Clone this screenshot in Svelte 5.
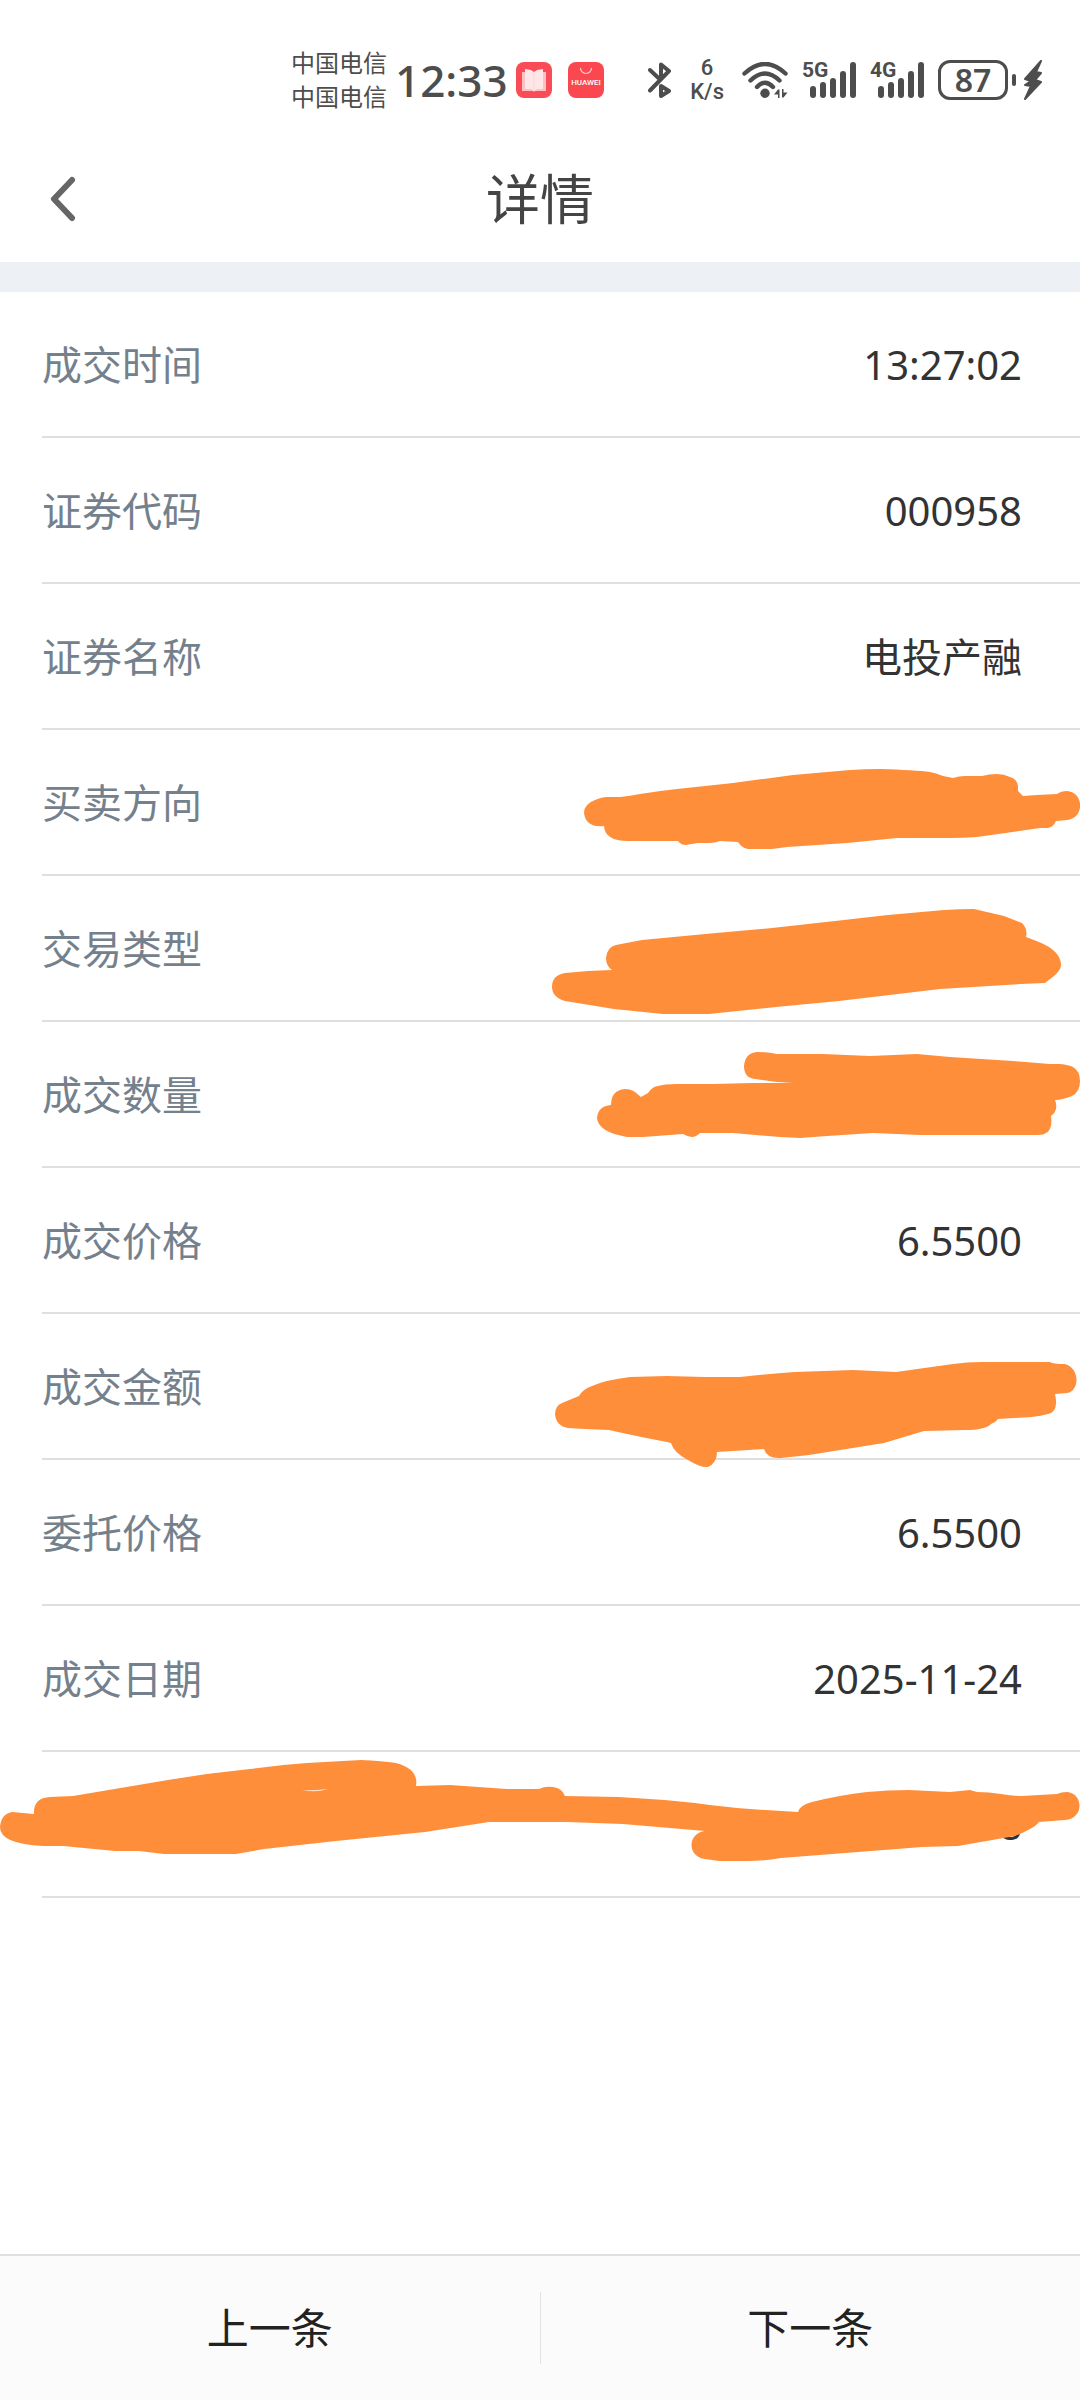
<script>
	const rows = [
		{ label: '成交时间', value: '13:27:02' },
		{ label: '证券代码', value: '000958' },
		{ label: '证券名称', value: '电投产融' },
		{
			label: '买卖方向',
			mark: 'M584 83Q584 74 595 70Q602 67 607 67L620 67Q630 66 640 64Q658 61 677 59L733 53L793 45L850 40Q865 39 880 39Q915 40 930 42Q936 43 943 46L953 48Q959 46 965 46L982 46Q989 44 997 44Q1004 44 1010 47Q1017 49 1018 56L1018 61L1023 66L1037 65L1057 64Q1061 61 1067 61C1084 62 1085 88 1067 90L1056 91Q1053 98 1047 98L1040 98L977 107Q963 108 950 108L897 108L847 113L787 117L772 119L748 119Q742 118 738 112L720 111Q715 113 710 113L698 113Q691 114 686 115Q681 115 678 111L628 111Q605 111 604 96Q586 98 584 83Z'
		},
		{
			label: '交易类型',
			mark: 'M552 111Q552 99 565 97L588 95L612 94Q606 90 606 82Q607 71 616 69L642 64L716 57L772 52L835 45L888 39L944 34Q960 33 974 33L1004 40L1022 47Q1028 53 1026 61L1039 66Q1061 75 1061 89Q1061 94 1054 100L1045 107L1021 108L940 113L881 120L839 125L776 131L709 138L663 138L614 133L565 125Q552 121 552 111Z'
		},
		{
			label: '成交数量',
			mark: 'M597 96Q598 84 611 83Q611 68 625 67Q631 67 635 70L641 75L648 71Q653 64 658 64Q664 62 677 62L713 62L753 61L793 61L777 60L755 57Q744 56 744 44Q745 31 757 30Q769 30 777 32L823 32L870 34L917 32L950 35L1013 39L1050 42L1060 42Q1069 43 1073 45Q1080 49 1080 59Q1080 70 1072 74Q1062 78 1055 78Q1059 88 1051 94C1053 107 1048 113 1038 113L920 113L873 111L827 114L800 116L780 115L733 111L700 111Q696 115 692 115Q688 115 683 112L643 115L627 115Q598 110 597 96Z'
		},
		{ label: '成交价格', value: '6.5500' },
		{
			label: '成交金额',
			mark: 'M555 100Q555 92 562 89L579 82Q583 75 592 72Q605 66 630 63L667 62L705 63L740 63Q767 60 795 58L853 56L896 58L953 50Q967 48 981 48L1050 48Q1053 50 1065 50C1080 54 1080 77 1067 79L1055 80Q1059 98 1048 100Q1041 102 1032 103L998 105Q995 109 991 110Q985 116 965 116L924 117L884 129L809 141L781 144Q767 145 764 135L717 138Q717 149 708 153Q701 154 688 146Q674 139 671 129L667 128Q640 123 609 116L585 115L568 114Q556 112 555 100Z'
		},
		{ label: '委托价格', value: '6.5500' },
		{ label: '成交日期', value: '2025-11-24' },
		{
			label: '',
			value: '8',
			mark: 'M0 75Q1 62 12 60L34 62Q33 46 50 45L73 44L168 28Q209 21 250 17Q278 13 307 11L361 8Q382 9 396 11Q419 17 416 34L450 33L507 37L539 37Q545 34 553 35Q562 36 565 44L619 45Q657 47 695 51Q725 55 750 57L798 60Q800 53 812 50Q840 43 867 40Q888 38 909 38L950 40L970 38L977 40Q989 40 1001 42Q1012 44 1022 44L1057 42Q1061 40 1067 40C1083 41 1085 66 1065 68L1039 70Q1035 76 1015 84L958 94L922 95L781 106Q763 109 747 109L719 109L705 107C687 105 687 81 705 79L623 72Q594 71 567 70L489 70L425 80L336 89L264 97L236 102L164 102L139 99L115 99L63 94L43 94Q0 92 0 75Z',
			gap: 'M302 38Q312 39 328 37Q316 41 302 38Z'
		}
	];

	const bars = [
		{ x: 8, h: 12 },
		{ x: 18, h: 16 },
		{ x: 28, h: 20 },
		{ x: 38, h: 27 },
		{ x: 48, h: 36 }
	];
</script>

<div class="page">
	<div class="status-bar">
		<div class="status-left">
			<div class="carriers">
				<span>中国电信</span>
				<span>中国电信</span>
			</div>
			<span class="clock">12:33</span>
			<div class="apps">
				<svg width="36" height="36" viewBox="0 0 36 36">
					<rect width="36" height="36" rx="8" fill="#f94c56" />
					<path d="M6 10h3v17h18V10h3v19H19l-1 1-1-1H6z" fill="#ffc0c3" />
					<path d="M9 7l6 1 3 2 3-2 6-1v20h-6l-3 2-3-2H9z" fill="#ffe6e7" />
					<path d="M18 10v19" stroke="#ffd2d4" stroke-width="1" />
				</svg>
				<svg width="36" height="36" viewBox="0 0 36 36">
					<rect width="36" height="36" rx="8" fill="#fb474f" />
					<path d="M12.500 6a5.500 5.500 0 0 0 11 0" fill="none" stroke="#ffd5d7" stroke-width="1.200" />
					<text class="brand" x="18" y="23" text-anchor="middle">HUAWEI</text>
				</svg>
			</div>
		</div>
		<div class="status-right">
			<svg width="24" height="36" viewBox="0 0 24 36" fill="none" stroke="#4d4d4d" stroke-width="4" stroke-linecap="round" stroke-linejoin="round">
				<path d="M2 8l10 9.500M13 15V2.500l8 6.500L2 28.500M13 24l8 5-8 5z" />
			</svg>
			<div class="speed">
				<span>6</span>
				<span>K/s</span>
			</div>
			<svg width="46" height="36" viewBox="0 0 46 36">
				<g fill="none" stroke="#4d4d4d" stroke-width="4.400" stroke-linecap="round">
					<path d="M2.500 11.500Q23-7.500 43.500 11.500" />
					<path d="M8.500 18.500Q23 4.500 37.500 18.500" />
					<path d="M15 25Q23 16.500 31 25" />
				</g>
				<circle cx="23" cy="31.300" r="4.700" fill="#4d4d4d" />
				<path d="M32 32.500l4-5h1.500V36H36v-3.500zM45.500 30.500l-4 5H40V27h1.500v3.500z" fill="#4d4d4d" />
			</svg>
			{#each ['5G', '4G'] as network}
				<div class="signal">
					<svg width="54" height="36" viewBox="0 0 54 36">
						{#each bars as bar}
							<rect x={bar.x} y={36 - bar.h} width="6" height={bar.h} rx="3" fill="#4d4d4d" />
						{/each}
					</svg>
					<span class="network">{network}</span>
				</div>
			{/each}
			<div class="power">
				<span class="battery">87</span>
				<span class="nub"></span>
				<svg width="18" height="40" viewBox="0 0 18 40">
					<path d="M17 1L1 19l6 2-6 4 6 1-6 13 16-17-6-2 6-7-5-1z" fill="#4d4d4d" stroke="#4d4d4d" stroke-width="2" stroke-linejoin="round" />
				</svg>
			</div>
		</div>
	</div>

	<header>
		<button class="back" type="button" aria-label="返回">
			<svg width="26" height="46" viewBox="0 0 26 46" fill="none" stroke="#666" stroke-width="6" stroke-linecap="round" stroke-linejoin="round">
				<path d="M22 4L4 23l18 19" />
			</svg>
		</button>
		<h1>详情</h1>
	</header>

	<main>
		<dl>
			{#each rows as row}
				<div class="row">
					<dt>{row.label}</dt>
					<dd>{row.value ?? ''}</dd>
					{#if row.mark}
						<svg class="mark" viewBox="0 0 1080 146" preserveAspectRatio="xMaxYMid meet" aria-hidden="true">
							<path d={row.mark} fill="#ff8e3b" />
							{#if row.gap}
								<path d={row.gap} fill="#ffe9d6" />
							{/if}
						</svg>
					{/if}
				</div>
			{/each}
		</dl>
	</main>

	<footer>
		<button type="button">上一条</button>
		<button type="button">下一条</button>
	</footer>
</div>

<style>
	:global(body) {
		background: #fff;
	}

	.page {
		display: flex;
		flex-direction: column;
		min-height: 100vh;
		font-family: 'Noto Sans', 'Noto Sans CJK SC', sans-serif;
		color: #333;
	}

	svg {
		display: block;
		flex-shrink: 0;
	}

	.status-bar {
		display: flex;
		justify-content: space-between;
		align-items: center;
		box-sizing: border-box;
		height: 136px;
		padding: 24px 38px 0 291px;
		color: #4d4d4d;
	}

	.status-left,
	.status-right,
	.apps,
	.power {
		display: flex;
		align-items: center;
	}

	.carriers {
		display: flex;
		flex-direction: column;
		font-size: 24px;
		line-height: 34px;
	}

	.clock {
		margin: 0 8px;
		font-size: 44px;
		font-weight: 500;
		line-height: 56px;
	}

	.apps {
		gap: 16px;
	}

	.brand {
		font-family: Roboto, sans-serif;
		font-size: 8px;
		font-weight: 500;
		fill: #fff;
	}

	.status-right {
		gap: 14px;
	}

	.speed {
		display: flex;
		flex-direction: column;
		align-items: center;
		margin: 0 4px;
		font-family: Roboto, sans-serif;
		font-size: 22px;
		font-weight: 500;
		line-height: 24px;
	}

	.signal {
		position: relative;
	}

	.network {
		position: absolute;
		top: -2px;
		left: 0;
		font-family: Roboto, sans-serif;
		font-size: 21px;
		font-weight: 700;
		line-height: 21px;
	}

	.power {
		gap: 4px;
	}

	.battery {
		display: flex;
		align-items: center;
		justify-content: center;
		box-sizing: border-box;
		width: 70px;
		height: 40px;
		border: 3px solid #4d4d4d;
		border-radius: 12px;
		font-size: 32px;
		font-weight: 600;
		line-height: 34px;
	}

	.nub {
		width: 4px;
		height: 12px;
		margin-right: 4px;
		border-radius: 2px;
		background: #4d4d4d;
	}

	header {
		position: relative;
		display: flex;
		align-items: center;
		justify-content: center;
		height: 126px;
		border-bottom: 30px solid #edf1f5;
	}

	.back {
		position: absolute;
		left: 26px;
		padding: 24px;
		border: none;
		background: transparent;
		cursor: pointer;
	}

	h1 {
		margin: 0;
		font-size: 54px;
		font-weight: 400;
		line-height: 72px;
		color: #444;
	}

	main {
		flex: 1;
	}

	dl {
		margin: 0;
	}

	.row {
		position: relative;
		display: flex;
		align-items: center;
		justify-content: space-between;
		box-sizing: border-box;
		height: 146px;
		margin-left: 42px;
		padding: 2px 58px 0 0;
		border-bottom: 2px solid #dfdfdf;
		font-size: 40px;
		line-height: 56px;
	}

	dt {
		color: #74818d;
	}

	dd {
		margin: 0;
	}

	.mark {
		position: absolute;
		top: 0;
		left: -42px;
		width: calc(100% + 42px);
		height: 146px;
		overflow: visible;
	}

	footer {
		display: flex;
		align-items: center;
		height: 144px;
		border-top: 2px solid #dfdfdf;
		background: #fbfbfb;
	}

	footer button {
		flex: 1;
		height: 72px;
		padding: 0;
		border: none;
		background: transparent;
		font-family: inherit;
		font-size: 42px;
		line-height: 56px;
		color: #222;
		cursor: pointer;
	}

	footer button + button {
		border-left: 1px solid #e4e4e4;
	}
</style>
